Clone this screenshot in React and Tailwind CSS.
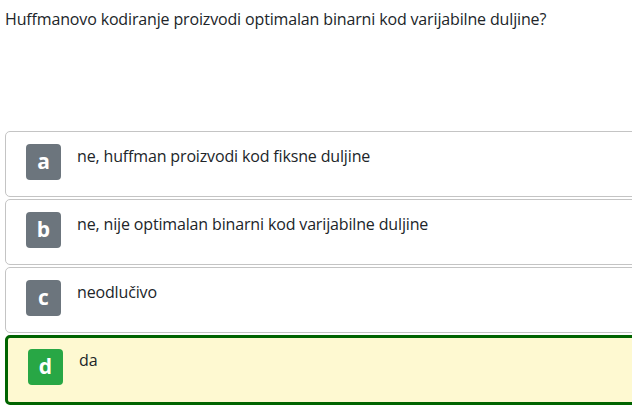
import React from 'react';

export default function App() {
  const answers = [
    { key: 'a', text: 'ne, huffman proizvodi kod fiksne duljine' },
    { key: 'b', text: 'ne, nije optimalan binarni kod varijabilne duljine' },
    { key: 'c', text: 'neodlučivo' },
    { key: 'd', text: 'da', selected: true },
  ];

  return (
    <div className="w-[632px] h-[411px] overflow-hidden bg-white text-[#212529] font-['Open_Sans',sans-serif]">
      <div className="pl-[5px] pt-[7px] text-[16px] leading-[24px] tracking-[-0.15px]">
        Huffmanovo kodiranje proizvodi optimalan binarni kod varijabilne duljine?
      </div>

      <div className="mt-[100px] ml-[5px] w-[640px] flex flex-col gap-[2px]">
        {answers.map((a) =>
          a.selected ? (
            <div key={a.key} className="h-[70px] flex items-start gap-[16px] pl-[20px] pt-[11px] rounded-[5px] border-[3px] border-[#006400] bg-[#fef9d1]">
              <div className="w-[35px] h-[36px] rounded-[4px] bg-[#28a745] text-white text-[21px] font-bold flex items-center justify-center">
                {a.key}
              </div>
              <div className="-mt-[1px] text-[16px] leading-[24px] tracking-[-0.15px]">{a.text}</div>
            </div>
          ) : (
            <div key={a.key} className="h-[66px] flex items-start gap-[16px] pl-[20px] pt-[12px] rounded-[5px] border border-[#c4c4c4] bg-white">
              <div className="w-[35px] h-[36px] rounded-[4px] bg-[#6c757d] text-white text-[21px] font-bold flex items-center justify-center">
                {a.key}
              </div>
              <div className="text-[16px] leading-[24px] tracking-[-0.15px]">{a.text}</div>
            </div>
          )
        )}
      </div>
    </div>
  );
}
